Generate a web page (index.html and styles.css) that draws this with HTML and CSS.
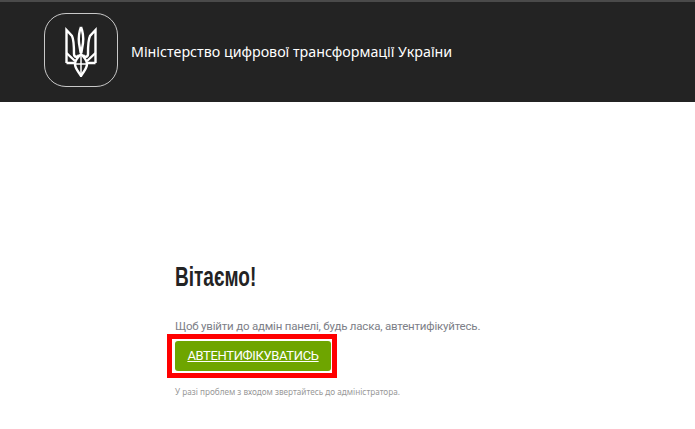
FILE: index.html
```html
<!DOCTYPE html>
<html>

<head>
  <meta charset="UTF-8">
  <title>Вітаємо</title>
  <link rel="stylesheet" href="styles.css">
</head>

<body>
  <header class="header">
    <div class="logo">
      <svg class="trident" viewBox="0 0 32 51" fill="none" stroke="#fff" stroke-width="2.400">
        <path d="M16 1 C14 6 13.500 12 14 17 L15.700 27 M16 1 C18 6 18.500 12 18 17 L16.300 27" />
        <path d="M1.500 37 L1.500 4 L7 10 C9 14 9 24 9 28 C9 31 12 32 14 29 M1.500 37 L11 37" />
        <path d="M30.500 37 L30.500 4 L25 10 C23 14 23 24 23 28 C23 31 20 32 18 29 M30.500 37 L21 37" />
        <path d="M1.500 27 L10 35 M30.500 27 L22 35" />
        <path d="M16 28 C13 31 10 34 10 38 C10 43 14 46 16 50 C18 46 22 43 22 38 C22 34 19 31 16 28 Z" />
        <path d="M16 28 L16 50 M10 38 L22 38" stroke-width="1.500" />
      </svg>
    </div>
    <span class="header-title">Міністерство цифрової трансформації України</span>
  </header>

  <main class="content">
    <h1 class="welcome">Вітаємо!</h1>
    <p class="intro">Щоб увійти до адмін панелі, будь ласка, автентифікуйтесь.</p>
    <div class="highlight">
      <a class="auth-btn" href="#">АВТЕНТИФІКУВАТИСЬ</a>
    </div>
    <p class="note">У разі проблем з входом звертайтесь до адміністратора.</p>
  </main>
</body>

</html>
```

FILE: styles.css
```css
body {
  margin: 0;
  font-family: "Noto Sans", sans-serif;
  background-color: #fff;
}

.header {
  display: flex;
  align-items: center;
  gap: 13px;
  height: 100px;
  padding-left: 44px;
  background-color: #232323;
  border-top: 2px solid #4a4a4a;
}

.logo {
  display: flex;
  align-items: center;
  justify-content: center;
  box-sizing: border-box;
  width: 74px;
  height: 74px;
  margin-top: -4px;
  border: 1.500px solid #c8c8c8;
  border-radius: 22px;
}

.trident {
  width: 32px;
  height: 51px;
  margin-top: 3px;
}

.header-title {
  font-size: 14.250px;
  color: #fff;
  margin-top: -1px;
}

.content {
  padding: 159px 0 0 175px;
}

.welcome {
  margin: 0;
  font-family: "Liberation Sans", sans-serif;
  font-size: 28px;
  line-height: 32px;
  font-weight: bold;
  color: #232323;
  transform: scaleX(0.68);
  transform-origin: left;
}

.intro {
  margin: 26px 0 0;
  font-family: Roboto, sans-serif;
  font-size: 11.500px;
  line-height: 14px;
  letter-spacing: -0.200px;
  color: #7d8088;
}

.highlight {
  display: inline-block;
  margin: 1px 0 0 -8px;
  padding: 2px 1px 2px 3px;
  border: 5px solid #f00;
}

.auth-btn {
  display: block;
  width: 156px;
  height: 30px;
  line-height: 30px;
  text-align: center;
  font-family: Roboto, sans-serif;
  font-size: 13px;
  letter-spacing: -0.350px;
  color: #fff;
  background-color: #6ea500;
  border-radius: 3px;
}

.note {
  margin: 8px 0 0;
  font-size: 8.200px;
  line-height: 12px;
  color: #999;
}
```
